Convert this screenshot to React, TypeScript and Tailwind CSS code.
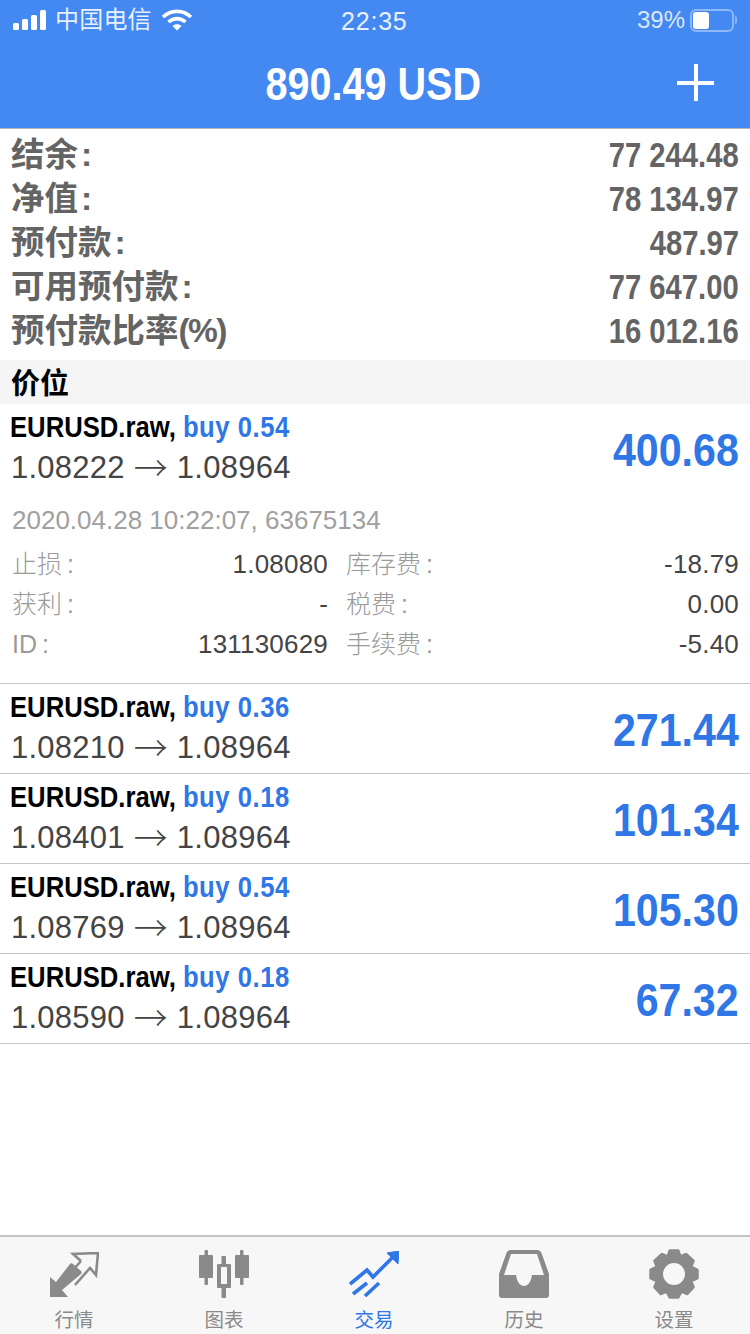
const SANS = "font-['Liberation_Sans','Noto_Sans_CJK_SC',sans-serif]";

const SUMMARY = [
  { label: "结余", suffix: ":", value: "77 244.48" },
  { label: "净值", suffix: ":", value: "78 134.97" },
  { label: "预付款", suffix: ":", value: "487.97" },
  { label: "可用预付款", suffix: ":", value: "77 647.00" },
  { label: "预付款比率", suffix: "(%)", value: "16 012.16" },
];

const POSITIONS = [
  { lots: "0.36", open: "1.08210", profit: "271.44" },
  { lots: "0.18", open: "1.08401", profit: "101.34" },
  { lots: "0.54", open: "1.08769", profit: "105.30" },
  { lots: "0.18", open: "1.08590", profit: "67.32" },
];

function PositionHead({ lots, open, profit }: { lots: string; open: string; profit: string }) {
  return (
    <div className="flex h-[89px] items-center justify-between pl-[10px] pr-[11px]">
      <div className="flex flex-col">
        <div className="h-[40px] origin-left scale-x-[0.855] text-[30px] font-bold leading-[36px] text-black whitespace-nowrap">
          EURUSD.raw, <span className="tracking-[0.6px] text-[#2f76e6]">buy {lots}</span>
        </div>
        <div className="flex h-[40px] items-start pl-[1px] text-[31px] leading-[38px] tracking-[0.25px] text-[#444444] whitespace-nowrap">
          {open}
          <span className="mx-[9px] font-['Noto_Sans_CJK_SC'] text-[34px] font-light leading-[36px] tracking-normal">→</span>
          {"1.08964"}
        </div>
      </div>
      <div className="origin-right scale-x-[0.875] pt-[2px] text-[47px] font-bold leading-none text-[#2f76e6]">
        {profit}
      </div>
    </div>
  );
}

function Detail({ label, value, wide }: { label: string; value: string; wide?: boolean }) {
  return (
    <div className={`flex items-center justify-between ${wide ? "w-[316px]" : "w-[393px]"}`}>
      <span className="text-[25px] font-light text-[#9a9a9a]">
        {label}
        <span className="ml-[5px]">:</span>
      </span>
      <span className="tracking-[0.2px] text-[#444444]">{value}</span>
    </div>
  );
}

function StatusBar() {
  return (
    <div className="relative flex h-[40px] items-center justify-between pl-[13px] pr-[13px] text-[24px] text-[#e8f0fe]">
      <div className="flex items-center gap-[6px]">
        <svg width="34" height="20" viewBox="0 0 34 20" fill="white">
          <rect x="0" y="13" width="6" height="7" rx="1.5" />
          <rect x="9" y="9" width="6" height="11" rx="1.5" />
          <rect x="18" y="5" width="6" height="15" rx="1.5" />
          <rect x="27" y="0" width="6" height="20" rx="1.5" />
        </svg>
        <span className="ml-[2px] text-[24px] tracking-[0.2px]">中国电信</span>
        <svg width="32" height="22" viewBox="0 0 32 22" fill="none" stroke="white" strokeWidth="3.6" className="ml-[3px]">
          <path d="M2 8 C10 0.5 22 0.5 30 8" />
          <path d="M7.5 13 C12.5 8.5 19.5 8.5 24.5 13" />
          <path d="M16 21.5 L11.5 17 C14 14.8 18 14.8 20.5 17 Z" fill="white" stroke="none" />
        </svg>
      </div>
      <span className="absolute left-[341px] top-[6px] text-[25px] leading-[30px] tracking-[0.8px]">22:35</span>
      <div className="flex items-center gap-[5px]">
        <span className="text-[24px] text-[#dbe7fc]">39%</span>
        <div className="flex items-center">
          <div className="flex h-[23px] w-[44px] items-center rounded-[6px] border-2 border-[#8db6f5] p-[1px]">
            <div className="h-full w-[16px] rounded-[3px] bg-white" />
          </div>
          <div className="ml-[1px] h-[8px] w-[2px] rounded-r bg-[#8db6f5]" />
        </div>
      </div>
    </div>
  );
}

function TabIcon({ name, color }: { name: string; color: string }) {
  if (name === "quotes") {
    return (
      <svg width="50" height="46" viewBox="0 0 50 46" fill="none" className="mt-[2px]">
        <path d="M1 25 L7 30 L21 12 C22 11 23 11 24 12 L32 19 C33 20 33 21 32 22 L13 38 L19 45 L1 45 Z" fill={color} />
        <path d="M32 9 L24 2 L49 1 L47 23 L41 16 L26 33 M32 9 L24 18" stroke={color} strokeWidth="2.6" />
      </svg>
    );
  }
  if (name === "chart") {
    return (
      <svg width="50" height="48" viewBox="0 0 50 48" fill={color}>
        <rect x="5.5" y="0" width="3.5" height="35" rx="1" />
        <rect x="0" y="5" width="14" height="23" rx="1" />
        <rect x="41" y="0" width="3.5" height="35" rx="1" />
        <rect x="36" y="5" width="14" height="23" rx="1" />
        <rect x="22.5" y="6" width="4.5" height="42" rx="1" />
        <rect x="18" y="14" width="14" height="24" rx="1" />
        <rect x="22" y="17" width="6" height="17" fill="#f7f7f7" />
      </svg>
    );
  }
  if (name === "trade") {
    return (
      <svg width="50" height="46" viewBox="0 0 50 46" fill="none" stroke={color} strokeWidth="3.6">
        <path d="M1 33 L18 19 L24 26 L44 6" />
        <path d="M4 43 L18 32" />
        <path d="M16 45 L30 32" />
        <path d="M38 2 L50 0 L49 13 Z" fill={color} strokeWidth="1" />
      </svg>
    );
  }
  if (name === "history") {
    return (
      <svg width="50" height="48" viewBox="0 0 50 48" fill={color}>
        <path
          fillRule="evenodd"
          d="M12 0 H38 C40 0 41.5 1 42.5 3 L50 24 V45 C50 47 49 48 47 48 H3 C1 48 0 47 0 45 V24 L7.5 3 C8.5 1 10 0 12 0 Z M12 4 L5 25 H17 C18 32 21 36 25 36 C29 36 32 32 33 25 H45 L38 4 Z"
        />
      </svg>
    );
  }
  return (
    <svg width="50" height="50" viewBox="0 0 50 50">
      <path
        d="M21 2 H29 L31 8 L37 5.5 L44 12 L41.5 18 L48 21 V29 L41.5 32 L44 38 L38 44.5 L32 42 L29 48 H21 L18 42 L12 44.5 L6 38 L8.5 32 L2 29 V21 L8.5 18 L6 12 L13 5.5 L19 8 Z"
        fill={color}
        stroke={color}
        strokeWidth="3.5"
        strokeLinejoin="round"
      />
      <circle cx="25" cy="25" r="11" fill="#f7f7f7" />
    </svg>
  );
}

const TABS = [
  { icon: "quotes", label: "行情" },
  { icon: "chart", label: "图表" },
  { icon: "trade", label: "交易", active: true },
  { icon: "history", label: "历史" },
  { icon: "settings", label: "设置" },
];

export default function App() {
  return (
    <div className={`flex h-[1334px] w-[750px] flex-col overflow-hidden bg-white ${SANS}`}>
      <header className="h-[129px] shrink-0 border-b border-[#b5b5b5] bg-[#4488f1]">
        <StatusBar />
        <div className="relative flex h-[88px] items-center justify-center pr-[4px]">
          <span className="scale-x-[0.86] text-[46px] font-bold leading-none text-white">890.49 USD</span>
          <div className="absolute right-[36px] top-[24px] h-[37px] w-[37px]">
            <div className="absolute left-[16.5px] top-0 h-[37px] w-[4px] bg-white" />
            <div className="absolute left-0 top-[16.5px] h-[4px] w-[37px] bg-white" />
          </div>
        </div>
      </header>

      <section className="flex flex-col pl-[11px] pr-[11px] pt-[3px]">
        {SUMMARY.map((row) => (
          <div key={row.label} className="flex h-[44px] items-center justify-between text-[#646464]">
            <span className="pt-[1px] text-[33.5px] font-bold leading-none">
              {row.label}
              <span className={row.suffix === ":" ? "ml-[3px]" : "tracking-[-1.6px]"}>{row.suffix}</span>
            </span>
            <span className="origin-right scale-x-[0.835] text-[35px] font-bold leading-none">{row.value}</span>
          </div>
        ))}
      </section>

      <div className="mt-[8px] flex h-[44px] shrink-0 items-center bg-[#f5f5f5] pl-[11px] pt-[5px] text-[29px] font-bold text-black">
        价位
      </div>

      <section>
        <div className="border-b border-[#c4c4c4]">
          <div className="h-[88px]">
            <PositionHead lots="0.54" open="1.08222" profit="400.68" />
          </div>
          <div className="h-[191px] pl-[12px] pr-[11px] text-[26px]">
            <div className="pt-[13px] leading-[30px] text-[#a0a0a0]">2020.04.28 10:22:07, 63675134</div>
            <div className="mt-[9px] flex justify-between leading-[40px]">
              <div className="flex flex-col">
                <Detail label="止损" value="1.08080" wide />
                <Detail label="获利" value="-" wide />
                <Detail label="ID" value="131130629" wide />
              </div>
              <div className="flex flex-col">
                <Detail label="库存费" value="-18.79" />
                <Detail label="税费" value="0.00" />
                <Detail label="手续费" value="-5.40" />
              </div>
            </div>
          </div>
        </div>
        {POSITIONS.map((p) => (
          <div key={p.open} className="border-b border-[#c4c4c4]">
            <PositionHead lots={p.lots} open={p.open} profit={p.profit} />
          </div>
        ))}
      </section>

      <nav className="mt-auto grid h-[99px] shrink-0 grid-cols-5 border-t-2 border-[#c4c4c4] bg-[#f7f7f7]">
        {TABS.map((tab) => {
          const color = tab.active ? "#2f76e6" : "#8a8a8a";
          return (
            <div key={tab.label} className="flex flex-col items-center pr-[2px] pt-[12px]">
              <div className="flex h-[50px] items-center">
                <TabIcon name={tab.icon} color={color} />
              </div>
              <span className={`mt-[9px] text-[19.5px] leading-[24px] ${tab.active ? "text-[#2f76e6]" : "text-[#8a8a8a]"}`}>
                {tab.label}
              </span>
            </div>
          );
        })}
      </nav>
    </div>
  );
}
